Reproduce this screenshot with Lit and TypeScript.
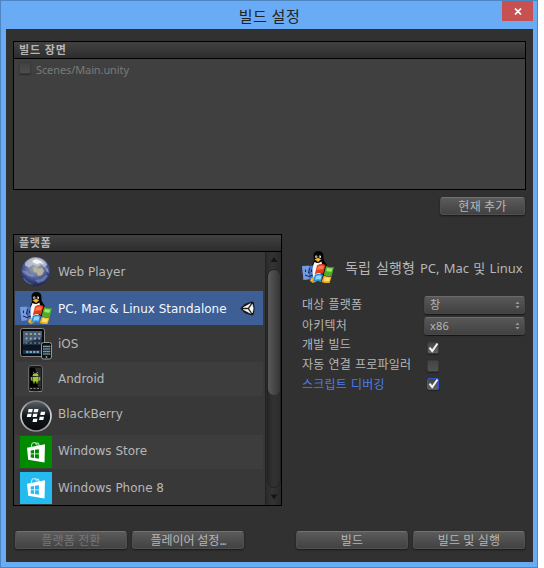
import { LitElement, html, svg, css } from "lit";
import { customElement, property } from "lit/decorators.js";

const globe = svg`
  <defs><radialGradient id="g" cx=".5" cy=".35" r=".68">
    <stop offset="0" stop-color="#a9aeb4"/><stop offset=".35" stop-color="#7685ac"/>
    <stop offset=".7" stop-color="#3a4886"/><stop offset="1" stop-color="#1b2048"/></radialGradient></defs>
  <circle cx="15.700" cy="16.500" r="14.500" fill="url(#g)"/>
  <path d="M5 8q5-6 11-5.500q8 .5 11 7l-2 3-4-3-3 2-5-2-4 3-4-2z" fill="#d3d6da" opacity=".7"/>
  <path d="M12 6l4-2 5 2 3 3-4-1-3 1-3-1z" fill="#f4f4f4"/>
  <path d="M13 13l3-1 2 2 4-1 2 3-2 4-4 1-1-3-3-1z" fill="#b9b595"/>
  <path d="M2 15l5 1 3 3 4 1-1 2-5-1-5-3zM15 25l6-1 5-4 2 1-4 5-6 2z" fill="#a5afd6" opacity=".45"/>
  <path d="M4 23q4 5 10 6.500-7 .5-11-6z" fill="#8a97cc" opacity=".5"/>
  <path d="M25 11l3 3 1 4-3-2z" fill="#8792bb"/>`;

const standalone = svg`
  <path d="M11.500 4Q12 0 16.500 0q4.500 0 4.800 4l.4 5q3.500 4 4 9l-8 12-8-2-.5-9q.5-5 2.800-9z" fill="#050505"/>
  <path d="M0 15L13 14.500q-2 7 0 13.500L1.500 29z" fill="#4a72c2"/><path d="M0 15l7-.3V28l-5.500 1z" fill="#7399de"/>
  <path d="M3.500 18.500v2.500M9.500 18.500v2.500M3 24q4 3 8 0M7.500 17l-1 5h1.500" stroke="#16224a" fill="none"/>
  <path d="M12.500 11q4 2 7-.5l1 6-4 13-5-2q-2.500-10 1-16.500z" fill="#f6f6f6"/>
  <ellipse cx="14.300" cy="5.700" rx="1.100" ry="1.300" fill="#fff"/><ellipse cx="17.900" cy="5.700" rx="1.100" ry="1.300" fill="#fff"/>
  <path d="M14.300 5.500v1M17.500 5.500v1" stroke="#111"/>
  <path d="M12.500 8.200L16 6.700l3.300 1.500L16 11z" fill="#f5b51b"/>
  <path d="M9 27.500l2.500-1.500 3.500 4-4 2-3-2z" fill="#edb32d"/>
  <path d="M15 14.500q4-2.500 8.500-.5l-2.400 9q-4-2-8.300.5z" fill="#e23a1b"/><path d="M16 15.500q3-1.500 6-.5l-1 3.500q-3-1-6 1z" fill="#fa7a52"/>
  <path d="M24 15q4 2 8 1l-2.400 9q-4 1-7.800-1.200z" fill="#4cae26"/><path d="M25 16.700q3 1 5.500.6l-1 3.500q-3 0-5.300-.7z" fill="#9fe569"/>
  <path d="M12.700 24q4.300-2.300 8.300-.2L18.800 31q-4-2-7.800 0z" fill="#318ad4"/><path d="M14 25q3-1.300 5.500-.3l-1 4q-3-1-5.300.3z" fill="#8cd8fa"/>
  <path d="M21.800 24.500q4 2 7.800 1l-2 6.500q-4 .7-8-.9z" fill="#f0a71c"/><path d="M22.800 26q3 1 5.300.6l-1 3.700q-3 .2-5.300-.6z" fill="#ffe16a"/>`;

const ios = svg`
  <rect x=".5" y=".5" width="24" height="28" rx="2" fill="#080a0d" stroke="#858585"/>
  <rect x="3" y="3" width="19" height="23" fill="#1d3246"/><path d="M3 3h19v6L3 16z" fill="#455c78"/><path d="M3 17h19v5H3z" fill="#0f1420"/>
  <path d="M5.500 6h15M5.500 10.500h15" stroke="#a9a695" stroke-width="2" stroke-dasharray="2 2.300"/>
  <path d="M5.500 15h15" stroke="#6b7c8c" stroke-width="1.500" stroke-dasharray="2 2.300"/>
  <path d="M6 24h14" stroke="#6aa7cf" stroke-width="2" stroke-dasharray="2.500 1"/>
  <rect x="21.500" y="14.500" width="10" height="16.500" rx="2" fill="#101010" stroke="#979797"/>
  <rect x="23" y="17" width="7" height="10" fill="#263d4f"/>
  <path d="M23.300 18.500h7M23.300 21h7M23.300 23.500h7M23.300 26h7" stroke="#acc1bd" stroke-width="1.200" stroke-dasharray="1.300 .7"/>
  <circle cx="26.500" cy="29" r=".9" fill="#999"/>`;

const android = svg`
  <rect x="8.500" y="2.500" width="14" height="26" rx="2.500" fill="#171717" stroke="#686868"/>
  <path d="M10 5h11v19H10z" fill="#000"/><path d="M15 5h6v19h-3z" fill="#2b2b2b"/>
  <path d="M10 25.500h11" stroke="#888" stroke-dasharray="2 1.500"/><path d="M9 28.500h4M18 28.500h4" stroke="#8b7770"/>
  <path d="M12.500 13.200q0-3 3-3t3 3zM12.500 13.900h6v4.500h-1v2.200h-1.200v-2.200h-1.600v2.200h-1.200v-2.200h-1zM10.800 14h1.100v3.500h-1.100zM19.100 14h1.100v3.500h-1.100z" fill="#9fc53a"/>
  <path d="M13.300 9l.8 1.500M17.700 9l-.8 1.500" stroke="#9fc53a" stroke-width=".7"/>`;

const blackberry = svg`
  <defs><linearGradient id="b" x2="0" y2="1"><stop offset="0" stop-color="#59636a"/><stop offset=".5" stop-color="#11181b"/><stop offset="1" stop-color="#05080a"/></linearGradient>
  <linearGradient id="r" x2="0" y2="1"><stop offset="0" stop-color="#858585"/><stop offset=".5" stop-color="#e6e6e6"/><stop offset="1" stop-color="#8d8d8d"/></linearGradient></defs>
  <circle cx="16" cy="16" r="15" fill="url(#b)" stroke="url(#r)" stroke-width="1.600"/>
  <g fill="#fff"><path d="M8.600 9h4.200l-.7 3.200H7.900zM14.300 9h4.200l-.7 3.200h-4.200zM20.900 11.700h4.300l-.7 3.200h-4.300zM7.500 13.700h4.200l-.7 3.200H6.800zM13.200 13.700h4.200l-.7 3.200h-4.200zM19.700 16.800H24l-.7 3.200H19zM13.200 18.700h4.300l-.7 3.200h-4.300z"/></g>`;

const store = (c: string) => svg`
  <path d="M0 0h32v32H0z" fill=${c}/>
  <path d="M11.500 12V9q.5-2.500 3-2.500 2 0 2.500 2.500v2M15 8q3-2 4 .5V11" fill="none" stroke="#fff" stroke-opacity=".7" stroke-width="1.100"/>
  <path d="M7 11.800L25 8.300 24.500 26.600 8.200 23.800z" fill="#fff"/>
  <path d="M10.700 14.400l3.300-.5v3.600h-3.300zM14.900 13.800l4-.6v4.300h-4zM10.700 18.300H14V22l-3.300-.5zM14.900 18.300h4v4.400l-4-.6z" fill=${c}/>`;

const unity = svg`
  <path d="M.3 7.500L5 2.800l7-2.300 1.700.8 1 6-1 6.200-1.700 1L5 12.200z" fill="#161616"/>
  <path d="M3.200 6.600L10.600 2.600 8 6.600zM3.200 8.500H8L10.600 12.400zM9.400 7.500L12.300 3.200 13.300 7.500 12.300 12z" fill="#fff" stroke="#fff" stroke-width=".5"/>`;

const icons: Record<string, unknown> = {
  globe, standalone, ios, android, blackberry,
  store: store("#008a00"), phone: store("#23baf0"),
};

const pic = (name: string) => html`<svg class="pic ${name}" viewBox="0 0 32 32" width="32" height="32">${icons[name]}</svg>`;

@customElement("check-box")
class CheckBox extends LitElement {
  @property({ type: Boolean }) on = false;
  static styles = css`
    :host { display: block; width: 12px; height: 12px; box-sizing: border-box; border: 1px solid #3a3a3a; border-radius: 2px;
      background: linear-gradient(#444, #515151); box-shadow: 0 1px 1px #222; }
    :host([on]) { background: linear-gradient(#444, #626262); }
    :host([focused]) { border-color: #2c55d3; }
    svg { display: block; overflow: visible; margin: -1px; }
  `;
  render() {
    return this.on ? html`<svg width="12" height="12"><path d="M2.500 5.700L5.200 9 10.500 1.500" fill="none" stroke="#f4f4f4" stroke-width="2"/></svg>` : null;
  }
}

@customElement("app-root")
class AppRoot extends LitElement {
  static styles = css`
    * { box-sizing: border-box; }
    :host { display: block; width: 544px; height: 568px; background: #fff; overflow: hidden;
      font: 11px/16px "DejaVu Sans", "Noto Sans CJK KR", sans-serif; color: #b6b6b6; }
    .ko { font-family: "Noto Sans CJK KR", sans-serif; letter-spacing: .3px; }
    .window { width: 538px; height: 568px; background: #6aabf6; border: 1px solid #4c85c2; padding: 0 4px 5px 5px; display: flex; flex-direction: column; }
    .title { height: 28px; display: grid; grid-template-columns: 31px 1fr 31px; flex: none; }
    .title h1 { grid-column: 2; margin: 0; text-align: center; font-size: 15px; line-height: 29px; font-weight: 400; color: #222; white-space: pre; letter-spacing: .6px; }
    .close { background: #c75050; height: 20px; display: grid; place-items: center; }
    .body { flex: 1; background: #313131; padding: 12px 7px 0; display: flex; flex-direction: column; }
    .panel { border: 1px solid #000; background: #383838; }
    .head { height: 17px; border-bottom: 1px solid #000; background: linear-gradient(#414141, #2d2d2d); padding-left: 5px; font-weight: 700; line-height: 15px; font-size: 11px; letter-spacing: 1px; }
    .scenes { height: 149px; background: #404040; width: 513px; }
    .scene { display: flex; gap: 5px; padding: 4px 5px; color: #7a7a7a; }
    .scene check-box { opacity: .75; margin-top: -1px; }
    .path { font-family: "Noto Sans", sans-serif; letter-spacing: -.1px; line-height: 14px; }
    .btn { height: 18px; width: 112px; border: 1px solid #505050; border-top-color: #727272; border-radius: 3px; background: linear-gradient(#5b5b5b, #424242);
      box-shadow: 0 1px 2px #181818; text-align: center; font-size: 12px; line-height: 15px; white-space: nowrap; }
    .btn.off { color: #777; }
    .dots { letter-spacing: -1.3px; }
    .player { letter-spacing: 0; }
    .add { width: 85px; align-self: flex-end; margin: 7px 1px 0 0; }
    .main { display: flex; margin-top: 19px; height: 272px; }
    .platforms { width: 269px; display: flex; flex-direction: column; flex: none; }
    .platforms .head { letter-spacing: .6px; }
    .view { display: flex; flex: 1; min-height: 0; }
    .rows { flex: 1; padding: 0 2px 0 1px; overflow: hidden; }
    .row { display: flex; height: 34px; margin-top: 3px; padding: 0 8px 0 5px; align-items: center; font-size: 12px; }
    .row .name { flex: 1; margin-left: 6px; white-space: nowrap; }
    .row.low .name { padding-top: 2px; }
    .row.high .name { padding-bottom: 2px; }
    .row.m1 { margin-top: 1px; }
    .row.m2 { margin-top: 2px; }
    .row.m4 { margin-top: 4px; }
    .row.alt { background: #3d3d3d; }
    .row.sel { background: #3d5f96; color: #f4f7ff; }
    .pic { display: block; flex: none; }
    .row .blackberry { margin-top: 4px; }
    .bar { width: 16px; border-left: 1px solid #222; background: linear-gradient(90deg, #2a2a2a, #333 40%, #292929); display: flex; flex-direction: column; align-items: center; }
    .arrow { height: 17px; display: block; flex: none; }
    .groove { flex: 1; width: 14px; border-radius: 7px; border: 1px solid #222; background: linear-gradient(90deg, #282828, #323232 50%, #2c2c2c); }
    .thumb { height: 125px; width: 12px; border-radius: 6px; background: linear-gradient(90deg, #595959, #484848 50%, #363636); }
    .options { margin-left: 20px; width: 224px; padding-top: 17px; }
    .product { display: flex; align-items: center; font: 13px/20px "Noto Sans", "Noto Sans CJK KR", sans-serif; gap: 11px; height: 32px; white-space: nowrap; word-spacing: .9px; }
    .hangul { font-size: 14px; letter-spacing: .2px; }
    .product .text { padding-top: 2px; }
    .form { margin-top: 11px; font-size: 12px; letter-spacing: .2px; }
    .line { display: grid; grid-template-columns: 122px 101px; height: 20px; align-items: center; white-space: nowrap; }
    .label { padding-top: 2px; }
    .line check-box { margin-left: 3px; }
    .dev check-box { margin-top: 7px; }
    .auto check-box { margin-top: 3px; }
    .focus { color: #4b7cf0; }
    .select { height: 18px; margin-top: 1px; border: 1px solid #484848; border-top-color: #6b6b6b; border-radius: 3px; box-shadow: 0 1px 1px #151515; background: linear-gradient(#585858, #414141);
      display: flex; justify-content: space-between; align-items: center; padding: 0 4px 0 5px; font: 11px/16px "Noto Sans", "Noto Sans CJK KR", sans-serif; }
    .arch .select { margin-top: 3px; }
    .foot { display: flex; margin: 25px 1px 0 2px; gap: 5px; }
    .gap { flex: 1; }
  `;

  private platforms = [
    ["globe", "Web Player", "m2 low"], ["standalone", "PC, Mac & Linux Standalone", "sel low"], ["ios", "iOS", "m2"],
    ["android", "Android", "alt m1"], ["blackberry", "BlackBerry", "m1"], ["store", "Windows Store", "alt m4 high"], ["phone", "Windows Phone 8", "m2"],
  ];

  private select(v: string) {
    return html`<div class="select"><span>${v}</span><svg width="5" height="8"><path d="M.5 3L2.500.5 4.500 3zM.5 5L2.500 7.500 4.500 5z" fill="#999"/></svg></div>`;
  }

  render() {
    return html`<div class="window">
      <div class="title ko"><h1>빌드 설정</h1><div class="close"><svg width="8" height="7"><path d="M1 .5L7 6.500M7 .5L1 6.500" stroke="#fff" stroke-width="1.700"/></svg></div></div>
      <div class="body">
        <div class="panel scenes"><div class="head ko">빌드 장면</div>
          <div class="scene"><check-box></check-box><span class="path">Scenes/Main.unity</span></div></div>
        <div class="btn add ko">현재 추가</div>
        <div class="main">
          <div class="panel platforms"><div class="head ko">플랫폼</div>
            <div class="view"><div class="rows">
              ${this.platforms.map(([i, n, c]) => html`<div class="row ${c}">${pic(i)}<span class="name">${n}</span>
                ${c.includes("sel") ? html`<svg width="15" height="15">${unity}</svg>` : null}</div>`)}
            </div>
            <div class="bar">
              <svg class="arrow" width="8" height="17"><path d="M.5 10L4 5 7.500 10z" fill="#151515"/></svg>
              <div class="groove"><div class="thumb"></div></div>
              <svg class="arrow" width="8" height="17"><path d="M.5 6.500L4 11.500 7.500 6.500z" fill="#151515"/></svg>
            </div></div>
          </div>
          <div class="options">
            <div class="product">${pic("standalone")}<span class="text"><span class="hangul">독립 실행형 </span>PC, Mac 및 Linux</span></div>
            <div class="form">
              <div class="line"><span class="label">대상 플랫폼</span>${this.select("창")}</div>
              <div class="line arch"><span class="label">아키텍처</span>${this.select("x86")}</div>
              <div class="line dev"><span class="label">개발 빌드</span><check-box on></check-box></div>
              <div class="line auto"><span class="label">자동 연결 프로파일러</span><check-box></check-box></div>
              <div class="line focus"><span class="label">스크립트 디버깅</span><check-box on focused></check-box></div>
            </div>
          </div>
        </div>
        <div class="foot ko"><div class="btn off">플랫폼 전환</div><div class="btn player">플레이어 설정<span class="dots">...</span></div><div class="gap"></div><div class="btn">빌드</div><div class="btn">빌드 및 실행</div></div>
      </div>
    </div>`;
  }
}
